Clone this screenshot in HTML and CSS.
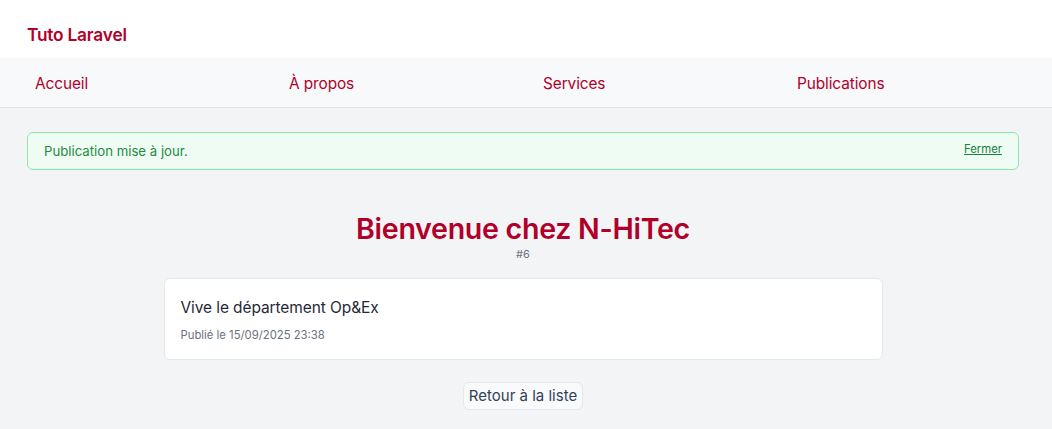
FILE: index.html
```html
<!DOCTYPE html>
<html lang="fr">
<head>
<meta charset="utf-8">
<title>Tuto Laravel</title>
<link rel="stylesheet" href="styles.css">
</head>
<body>
<header class="topbar">
  <div class="brand">Tuto Laravel</div>
</header>
<nav class="nav">
  <a href="#">Accueil</a>
  <a href="#">À propos</a>
  <a href="#">Services</a>
  <a href="#">Publications</a>
</nav>
<main class="main">
  <div class="alert">
    <span>Publication mise à jour.</span>
    <a href="#" class="close">Fermer</a>
  </div>
  <h1 class="title">Bienvenue chez N-HiTec</h1>
  <div class="id">#6</div>
  <article class="card">
    <h2 class="card-title">Vive le département Op&amp;Ex</h2>
    <p class="card-date">Publié le 15/09/2025 23:38</p>
  </article>
  <div class="actions">
    <a href="#" class="btn">Retour à la liste</a>
  </div>
</main>
</body>
</html>
```
FILE: styles.css
```css
* { box-sizing: border-box; }
html, body { margin: 0; padding: 0; }
body {
  font-family: Inter, "Noto Sans", sans-serif;
  background: #f3f4f6;
  color: #1f2937;
  height: 429px;
  overflow: hidden;
}
a { text-decoration: none; }
.topbar {
  background: #fff;
  height: 58px;
  display: flex;
  align-items: center;
  padding: 0 27px;
}
.brand {
  color: #b0002a;
  font-size: 17.3px;
  font-weight: 600;
  letter-spacing: -0.2px;
  padding-top: 10px;
}
.nav {
  background: #f8f9fa;
  height: 50px;
  border-bottom: 1px solid #e2e4e8;
  display: grid;
  grid-template-columns: repeat(4, 254px);
  align-items: center;
  padding: 2px 35px 0;
}
.nav a {
  color: #b0002a;
  font-size: 15.4px;
  letter-spacing: -0.1px;
}
.main {
  padding: 24px 33px 0 27px;
  display: flex;
  flex-direction: column;
  align-items: center;
}
.alert {
  width: 100%;
  height: 38px;
  background: #effcf3;
  border: 1px solid #8ae8a8;
  border-radius: 6px;
  display: flex;
  align-items: center;
  justify-content: space-between;
  padding: 0 16px 0 16px;
  color: #1f8a45;
  font-size: 13.2px;
}
.alert .close {
  color: #15803d;
  font-size: 11.3px;
  text-decoration: underline;
  margin-top: -4px;
}
.title {
  margin: 41px 0 0;
  color: #b0002a;
  font-size: 28.6px;
  font-weight: 600;
  line-height: 36px;
  letter-spacing: -0.3px;
}
.id {
  color: #6b7280;
  font-size: 11px;
  line-height: 14px;
  margin-top: 0;
}
.card {
  width: 719px;
  margin-top: 17px;
  background: #fff;
  border: 1px solid #e5e7eb;
  border-radius: 6px;
  padding: 18px 16px 16px;
}
.card-title {
  margin: 0;
  font-size: 15.5px;
  font-weight: 400;
  color: #1f2937;
  line-height: 22px;
  letter-spacing: -0.1px;
}
.card-date {
  margin: 8px 0 0;
  font-size: 11.3px;
  color: #6b7280;
  line-height: 16px;
}
.actions {
  margin-top: 22px;
}
.btn {
  display: inline-block;
  background: #f8fafc;
  border: 1px solid #e5e7eb;
  border-radius: 6px;
  padding: 3px 5px;
  color: #334155;
  font-size: 15px;
  line-height: 20px;
}
```
